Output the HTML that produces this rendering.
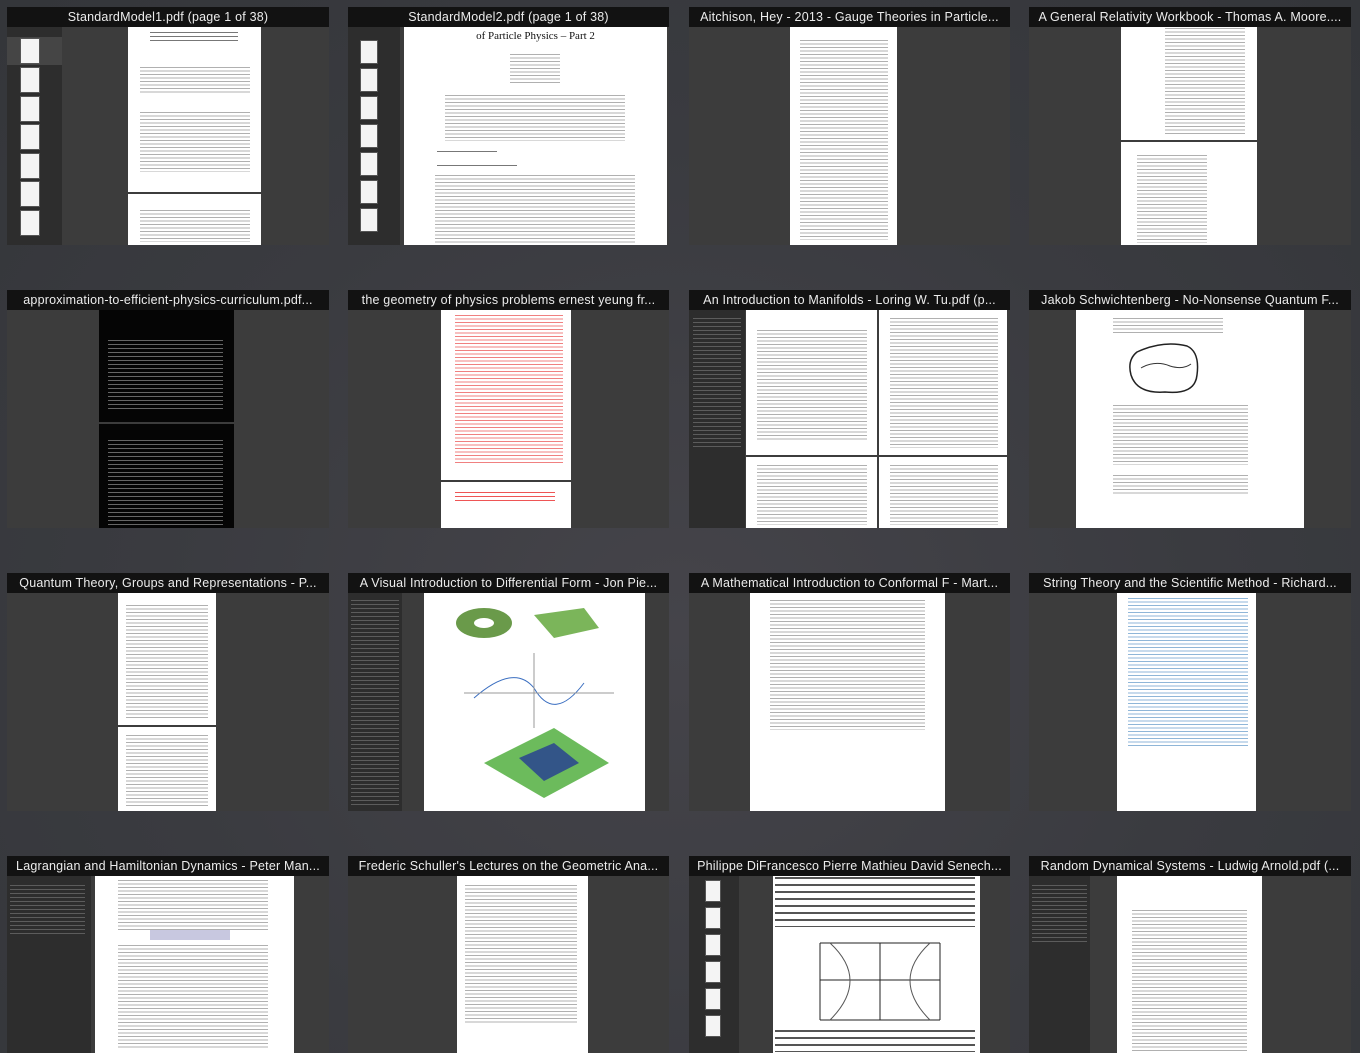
<!DOCTYPE html>
<html><head><meta charset="utf-8"><style>
*{margin:0;padding:0;box-sizing:border-box}
body{width:1360px;height:1053px;overflow:hidden;position:relative;background:radial-gradient(ellipse at 50% 60%,#45444a 0%,#3a3b40 55%,#34363a 100%);font-family:"Liberation Sans",sans-serif}
.a{position:absolute}
.t{position:absolute;height:20px;background:#121212;color:#ececec;font-size:12.5px;line-height:20px;text-align:center;white-space:nowrap;overflow:hidden;letter-spacing:.2px}
.b{position:absolute;background:#3c3c3c}
.sb{position:absolute;background:#2d2d2d}
.p{position:absolute;background:#fff}
.tx{position:absolute;background:repeating-linear-gradient(#b0b0b0 0 1px,transparent 1px 3.5px)}
.txd{position:absolute;background:repeating-linear-gradient(#777 0 1px,transparent 1px 4px)}
.th{position:absolute;background:#f4f4f4;border:1px solid #555}
</style></head><body>

<!-- Row 1 -->
<div class="t" style="left:7px;top:7px;width:322px">StandardModel1.pdf (page 1 of 38)</div>
<div class="b" style="left:7px;top:27px;width:322px;height:218px"></div>
<div class="sb" style="left:7px;top:27px;width:55px;height:218px"></div>
<div class="a" style="left:7px;top:37px;width:55px;height:28px;background:#454545"></div>
<div class="th" style="left:20px;top:38px;width:20px;height:26px"></div>
<div class="th" style="left:20px;top:67px;width:20px;height:26px"></div>
<div class="th" style="left:20px;top:96px;width:20px;height:26px"></div>
<div class="th" style="left:20px;top:124px;width:20px;height:26px"></div>
<div class="th" style="left:20px;top:153px;width:20px;height:26px"></div>
<div class="th" style="left:20px;top:181px;width:20px;height:26px"></div>
<div class="th" style="left:20px;top:210px;width:20px;height:26px"></div>
<div class="p" style="left:128px;top:27px;width:133px;height:165px"></div>
<div class="txd" style="left:150px;top:32px;width:88px;height:10px"></div>
<div class="tx" style="left:140px;top:67px;width:110px;height:26px"></div>
<div class="tx" style="left:140px;top:112px;width:110px;height:60px"></div>
<div class="p" style="left:128px;top:194px;width:133px;height:51px"></div>
<div class="tx" style="left:140px;top:210px;width:110px;height:32px"></div>

<div class="t" style="left:348px;top:7px;width:321px">StandardModel2.pdf (page 1 of 38)</div>
<div class="b" style="left:348px;top:27px;width:321px;height:218px"></div>
<div class="sb" style="left:348px;top:27px;width:52px;height:218px"></div>
<div class="th" style="left:360px;top:40px;width:18px;height:24px"></div>
<div class="th" style="left:360px;top:68px;width:18px;height:24px"></div>
<div class="th" style="left:360px;top:96px;width:18px;height:24px"></div>
<div class="th" style="left:360px;top:124px;width:18px;height:24px"></div>
<div class="th" style="left:360px;top:152px;width:18px;height:24px"></div>
<div class="th" style="left:360px;top:180px;width:18px;height:24px"></div>
<div class="th" style="left:360px;top:208px;width:18px;height:24px"></div>
<div class="p" style="left:404px;top:27px;width:263px;height:218px"></div>
<div class="a" style="left:404px;top:30px;width:263px;text-align:center;font-family:'Liberation Serif',serif;font-size:11px;color:#111">of Particle Physics – Part 2</div>
<div class="tx" style="left:510px;top:54px;width:50px;height:30px"></div>
<div class="tx" style="left:445px;top:95px;width:180px;height:46px"></div>
<div class="txd" style="left:437px;top:151px;width:60px;height:2px"></div>
<div class="txd" style="left:437px;top:165px;width:80px;height:2px"></div>
<div class="tx" style="left:435px;top:175px;width:200px;height:68px"></div>

<div class="t" style="left:689px;top:7px;width:321px">Aitchison, Hey - 2013 - Gauge Theories in Particle...</div>
<div class="b" style="left:689px;top:27px;width:321px;height:218px"></div>
<div class="p" style="left:790px;top:27px;width:107px;height:218px"></div>
<div class="tx" style="left:800px;top:40px;width:88px;height:200px"></div>

<div class="t" style="left:1029px;top:7px;width:322px">A General Relativity Workbook - Thomas A. Moore....</div>
<div class="b" style="left:1029px;top:27px;width:322px;height:218px"></div>
<div class="p" style="left:1121px;top:27px;width:136px;height:113px"></div>
<div class="tx" style="left:1165px;top:28px;width:80px;height:108px"></div>
<div class="p" style="left:1121px;top:142px;width:136px;height:103px"></div>
<div class="tx" style="left:1137px;top:155px;width:70px;height:88px"></div>

<!-- Row 2 -->
<div class="t" style="left:7px;top:290px;width:322px">approximation-to-efficient-physics-curriculum.pdf...</div>
<div class="b" style="left:7px;top:310px;width:322px;height:218px"></div>
<div class="p" style="left:99px;top:310px;width:135px;height:112px;background:#050505"></div>
<div class="a" style="left:108px;top:340px;width:115px;height:70px;background:repeating-linear-gradient(#666 0 1px,transparent 1px 4px)"></div>
<div class="p" style="left:99px;top:424px;width:135px;height:104px;background:#050505"></div>
<div class="a" style="left:108px;top:440px;width:115px;height:86px;background:repeating-linear-gradient(#666 0 1px,transparent 1px 4px)"></div>

<div class="t" style="left:348px;top:290px;width:321px">the geometry of physics problems ernest yeung fr...</div>
<div class="b" style="left:348px;top:310px;width:321px;height:218px"></div>
<div class="p" style="left:441px;top:310px;width:130px;height:170px"></div>
<div class="a" style="left:455px;top:315px;width:108px;height:150px;background:repeating-linear-gradient(#f08080 0 1px,transparent 1px 3.5px)"></div>
<div class="p" style="left:441px;top:482px;width:130px;height:46px"></div>
<div class="a" style="left:455px;top:492px;width:100px;height:12px;background:repeating-linear-gradient(#e55 0 1px,transparent 1px 4px)"></div>

<div class="t" style="left:689px;top:290px;width:321px">An Introduction to Manifolds - Loring W. Tu.pdf (p...</div>
<div class="b" style="left:689px;top:310px;width:321px;height:218px"></div>
<div class="sb" style="left:689px;top:310px;width:56px;height:218px"></div>
<div class="a" style="left:693px;top:318px;width:48px;height:132px;background:repeating-linear-gradient(#5c5c5c 0 1px,transparent 1px 4px)"></div>
<div class="p" style="left:746px;top:310px;width:131px;height:145px"></div>
<div class="tx" style="left:757px;top:330px;width:110px;height:110px"></div>
<div class="p" style="left:879px;top:310px;width:128px;height:145px"></div>
<div class="tx" style="left:890px;top:318px;width:108px;height:130px"></div>
<div class="p" style="left:746px;top:457px;width:131px;height:71px"></div>
<div class="tx" style="left:757px;top:465px;width:110px;height:60px"></div>
<div class="p" style="left:879px;top:457px;width:128px;height:71px"></div>
<div class="tx" style="left:890px;top:465px;width:108px;height:60px"></div>

<div class="t" style="left:1029px;top:290px;width:322px">Jakob Schwichtenberg - No-Nonsense Quantum F...</div>
<div class="b" style="left:1029px;top:310px;width:322px;height:218px"></div>
<div class="p" style="left:1076px;top:310px;width:228px;height:218px"></div>
<div class="tx" style="left:1113px;top:318px;width:110px;height:16px"></div>
<svg class="a" style="left:1125px;top:340px" width="80" height="60"><path d="M12 12 Q38 0 62 6 Q75 12 72 35 Q70 55 40 52 Q12 54 6 35 Q2 20 12 12Z" fill="none" stroke="#222" stroke-width="1.5"/><path d="M16 28 Q30 20 45 26 Q58 30 66 24" fill="none" stroke="#333"/></svg>
<div class="tx" style="left:1113px;top:405px;width:135px;height:60px"></div>
<div class="tx" style="left:1113px;top:475px;width:135px;height:20px"></div>

<!-- Row 3 -->
<div class="t" style="left:7px;top:573px;width:322px">Quantum Theory, Groups and Representations - P...</div>
<div class="b" style="left:7px;top:593px;width:322px;height:218px"></div>
<div class="p" style="left:118px;top:593px;width:98px;height:132px"></div>
<div class="tx" style="left:126px;top:605px;width:82px;height:115px"></div>
<div class="p" style="left:118px;top:727px;width:98px;height:84px"></div>
<div class="tx" style="left:126px;top:735px;width:82px;height:72px"></div>

<div class="t" style="left:348px;top:573px;width:321px">A Visual Introduction to Differential Form - Jon Pie...</div>
<div class="b" style="left:348px;top:593px;width:321px;height:218px"></div>
<div class="sb" style="left:348px;top:593px;width:54px;height:218px"></div>
<div class="a" style="left:351px;top:600px;width:48px;height:208px;background:repeating-linear-gradient(#5c5c5c 0 1px,transparent 1px 4px)"></div>
<div class="p" style="left:424px;top:593px;width:221px;height:218px"></div>
<svg class="a" style="left:424px;top:593px" width="221" height="218">
<ellipse cx="60" cy="30" rx="28" ry="15" fill="#6a9a4a"/><ellipse cx="60" cy="30" rx="10" ry="5" fill="#fff"/>
<path d="M110 22 L160 15 L175 35 L130 45Z" fill="#7bb55a"/>
<path d="M50 105 Q90 70 110 95 Q130 130 160 90" fill="none" stroke="#3a6ec0"/>
<path d="M40 100 L190 100 M110 60 L110 135" stroke="#999"/>
<path d="M60 170 L130 135 L185 170 L120 205Z" fill="#6cbb5c"/>
<path d="M95 165 L130 150 L155 170 L120 188Z" fill="#335588"/>
</svg>

<div class="t" style="left:689px;top:573px;width:321px">A Mathematical Introduction to Conformal F - Mart...</div>
<div class="b" style="left:689px;top:593px;width:321px;height:218px"></div>
<div class="p" style="left:750px;top:593px;width:195px;height:218px"></div>
<div class="tx" style="left:770px;top:600px;width:155px;height:130px"></div>

<div class="t" style="left:1029px;top:573px;width:322px">String Theory and the Scientific Method - Richard...</div>
<div class="b" style="left:1029px;top:593px;width:322px;height:218px"></div>
<div class="p" style="left:1117px;top:593px;width:139px;height:218px"></div>
<div class="a" style="left:1128px;top:598px;width:120px;height:150px;background:repeating-linear-gradient(#8fb6d8 0 1px,transparent 1px 3.5px)"></div>

<!-- Row 4 -->
<div class="t" style="left:7px;top:856px;width:322px">Lagrangian and Hamiltonian Dynamics - Peter Man...</div>
<div class="b" style="left:7px;top:876px;width:322px;height:177px"></div>
<div class="sb" style="left:7px;top:876px;width:84px;height:177px"></div>
<div class="a" style="left:10px;top:885px;width:75px;height:50px;background:repeating-linear-gradient(#5c5c5c 0 1px,transparent 1px 4px)"></div>
<div class="p" style="left:95px;top:876px;width:199px;height:177px"></div>
<div class="tx" style="left:118px;top:880px;width:150px;height:50px"></div>
<div class="a" style="left:150px;top:930px;width:80px;height:10px;background:#c8c8e0"></div>
<div class="tx" style="left:118px;top:945px;width:150px;height:105px"></div>

<div class="t" style="left:348px;top:856px;width:321px">Frederic Schuller's Lectures on the Geometric Ana...</div>
<div class="b" style="left:348px;top:876px;width:321px;height:177px"></div>
<div class="p" style="left:457px;top:876px;width:131px;height:177px"></div>
<div class="tx" style="left:465px;top:885px;width:112px;height:140px"></div>

<div class="t" style="left:689px;top:856px;width:321px">Philippe DiFrancesco Pierre Mathieu David Senech...</div>
<div class="b" style="left:689px;top:876px;width:321px;height:177px"></div>
<div class="sb" style="left:689px;top:876px;width:50px;height:177px"></div>
<div class="th" style="left:705px;top:880px;width:16px;height:22px"></div>
<div class="th" style="left:705px;top:907px;width:16px;height:22px"></div>
<div class="th" style="left:705px;top:934px;width:16px;height:22px"></div>
<div class="th" style="left:705px;top:961px;width:16px;height:22px"></div>
<div class="th" style="left:705px;top:988px;width:16px;height:22px"></div>
<div class="th" style="left:705px;top:1015px;width:16px;height:22px"></div>
<div class="p" style="left:773px;top:876px;width:207px;height:177px"></div>
<div class="a" style="left:775px;top:877px;width:200px;height:50px;background:repeating-linear-gradient(#555 0 2px,transparent 2px 7px)"></div>
<svg class="a" style="left:790px;top:935px" width="180" height="90"><path d="M30 8 H150 M30 45 H150 M30 85 H150 M30 8 V85 M150 8 V85 M90 8 V85" stroke="#222" fill="none"/><path d="M40 8 Q80 45 40 85 M140 8 Q100 45 140 85" stroke="#555" fill="none"/></svg>
<div class="a" style="left:775px;top:1030px;width:200px;height:22px;background:repeating-linear-gradient(#555 0 2px,transparent 2px 7px)"></div>

<div class="t" style="left:1029px;top:856px;width:322px">Random Dynamical Systems - Ludwig Arnold.pdf (...</div>
<div class="b" style="left:1029px;top:876px;width:322px;height:177px"></div>
<div class="sb" style="left:1029px;top:876px;width:61px;height:177px"></div>
<div class="a" style="left:1032px;top:885px;width:55px;height:60px;background:repeating-linear-gradient(#5c5c5c 0 1px,transparent 1px 4px)"></div>
<div class="p" style="left:1117px;top:876px;width:145px;height:177px"></div>
<div class="tx" style="left:1132px;top:910px;width:115px;height:142px"></div>
</body></html>
